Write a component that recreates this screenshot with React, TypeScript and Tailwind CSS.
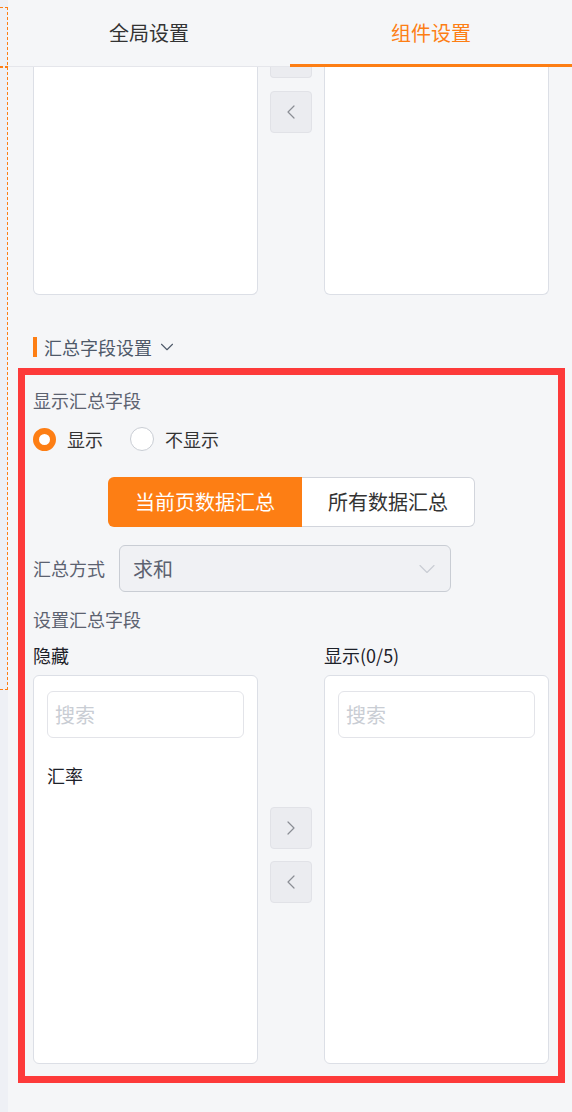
import { ChevronDown, ChevronLeft, ChevronRight } from 'lucide-react'

const font = { fontFamily: '"Noto Sans CJK SC", "Noto Sans", sans-serif' }

const ArrowButton = ({ dir }: { dir: 'left' | 'right' }) => (
  <div className="w-[42px] h-[42px] rounded-[4px] bg-[#ebecf0] border border-[#e1e2e7] flex items-center justify-center text-[#8a8d94]">
    {dir === 'left' ? <ChevronLeft size={24} strokeWidth={1.2} /> : <ChevronRight size={24} strokeWidth={1.2} />}
  </div>
)

const SearchBox = () => (
  <div className="h-[47px] rounded-[6px] border border-[#e3e4e9] flex items-center px-[7px] text-[20px] text-[#c9cdd4]">
    搜索
  </div>
)

const Radio = ({ checked, label }: { checked: boolean; label: string }) => (
  <div className="flex items-center">
    {checked ? (
      <div className="w-[23px] h-[23px] rounded-full border-[6px] border-[#fd7e14] bg-white" />
    ) : (
      <div className="w-[24px] h-[24px] rounded-full border border-[#c9cdd4] bg-white" />
    )}
    <span className="ml-[11px] text-[18px] text-[#333] leading-6">{label}</span>
  </div>
)

export default function App() {
  return (
    <div className="w-[572px] h-[1112px] flex bg-[#f5f6f8] overflow-hidden" style={font}>
      {/* left strip with dashed selection outline */}
      <div className="w-[8px] h-full bg-[#eef0f5] relative shrink-0">
        <div className="absolute left-0 top-[7px] w-[7px] h-[1px] bg-[repeating-linear-gradient(to_right,#fd7e14_0_3px,transparent_3px_5px)]" />
        <div className="absolute left-0 top-[66px] w-[8px] h-[2px] bg-[repeating-linear-gradient(to_right,#fd7e14_0_3px,transparent_3px_5px)]" />
        <div className="absolute left-[7px] top-[7px] w-[1px] h-[683px] bg-[repeating-linear-gradient(to_bottom,#fd7e14_0_3px,transparent_3px_5px)]" />
        <div className="absolute left-0 top-[689px] w-[8px] h-[1px] bg-[repeating-linear-gradient(to_right,#fd7e14_0_3px,transparent_3px_5px)]" />
      </div>

      <div className="flex-1 flex flex-col">
        {/* Tabs */}
        <div className="h-[67px] flex border-b border-[#e5e6eb] shrink-0">
          <div className="flex-1 flex items-center justify-center text-[20px] text-[#333]">全局设置</div>
          <div className="flex-1 flex items-center justify-center text-[20px] text-[#fd7e14] relative">
            组件设置
            <div className="absolute left-0 right-0 bottom-[-1px] h-[3px] bg-[#fd7e14]" />
          </div>
        </div>

        {/* previous transfer (scrolled) */}
        <div className="flex pl-[25px] gap-[12px] h-[228px] shrink-0">
          <div className="w-[225px] bg-white border-x border-b border-[#dcdfe6] rounded-b-[6px]" />
          <div className="w-[42px] flex flex-col">
            <div className="h-[11px] bg-[#ebecf0] border-x border-b border-[#e1e2e7] rounded-b-[4px]" />
            <div className="mt-[13px]">
              <ArrowButton dir="left" />
            </div>
          </div>
          <div className="w-[225px] bg-white border-x border-b border-[#dcdfe6] rounded-b-[6px]" />
        </div>

        {/* Section header */}
        <div className="flex items-center mt-[42px] pl-[25px] h-[20px]">
          <div className="w-[4px] h-[20px] bg-[#fd7e14]" />
          <span className="ml-[7px] text-[18px] text-[#4e5969] leading-6">汇总字段设置</span>
          <ChevronDown size={22} strokeWidth={1.2} className="ml-[4px] text-[#4e5969]" />
        </div>

        {/* Highlighted summary config */}
        <div className="mt-[11px] ml-[10px] w-[547px] border-[7px] border-[#fd3a3a] pt-[13px] pb-[12px] pl-[8px]">
          <div className="text-[18px] leading-6 text-[#5c6270]">显示汇总字段</div>
          <div className="flex items-center gap-[27px] mt-[15px] h-[24px]">
            <Radio checked label="显示" />
            <Radio checked={false} label="不显示" />
          </div>

          <div className="flex justify-center mt-[26px] -ml-[8px]">
            <div className="w-[194px] h-[50px] bg-[#fd7e14] rounded-l-[6px] flex items-center justify-center text-[20px] text-white">
              当前页数据汇总
            </div>
            <div className="w-[173px] h-[50px] bg-white border border-[#d2d5dc] border-l-0 rounded-r-[6px] flex items-center justify-center text-[20px] text-[#333]">
              所有数据汇总
            </div>
          </div>

          <div className="flex items-center mt-[18px]">
            <span className="text-[18px] text-[#5c6270] w-[86px]">汇总方式</span>
            <div className="w-[332px] h-[47px] rounded-[6px] bg-[#f0f1f4] border border-[#c9cdd4] flex items-center justify-between pl-[13px] pr-[9px]">
              <span className="text-[20px] text-[#5c6270]">求和</span>
              <ChevronDown size={28} strokeWidth={1} className="text-[#c9cdd4]" />
            </div>
          </div>

          <div className="text-[18px] leading-6 text-[#5c6270] mt-[15px]">设置汇总字段</div>

          <div className="flex mt-[12px] text-[18px] leading-6 text-[#1d2129]">
            <span className="w-[291px]">隐藏</span>
            <span>显示(0/5)</span>
          </div>

          <div className="flex gap-[12px] mt-[8px]">
            <div className="w-[225px] h-[389px] bg-white border border-[#dcdfe6] rounded-[6px] px-[13px] pt-[15px]">
              <SearchBox />
              <div className="mt-[25px] text-[18px] text-[#1d2129] leading-6">汇率</div>
            </div>
            <div className="w-[42px] flex flex-col gap-[12px] pt-[132px]">
              <ArrowButton dir="right" />
              <ArrowButton dir="left" />
            </div>
            <div className="w-[225px] h-[389px] bg-white border border-[#dcdfe6] rounded-[6px] px-[13px] pt-[15px]">
              <SearchBox />
            </div>
          </div>
        </div>
      </div>
    </div>
  )
}
